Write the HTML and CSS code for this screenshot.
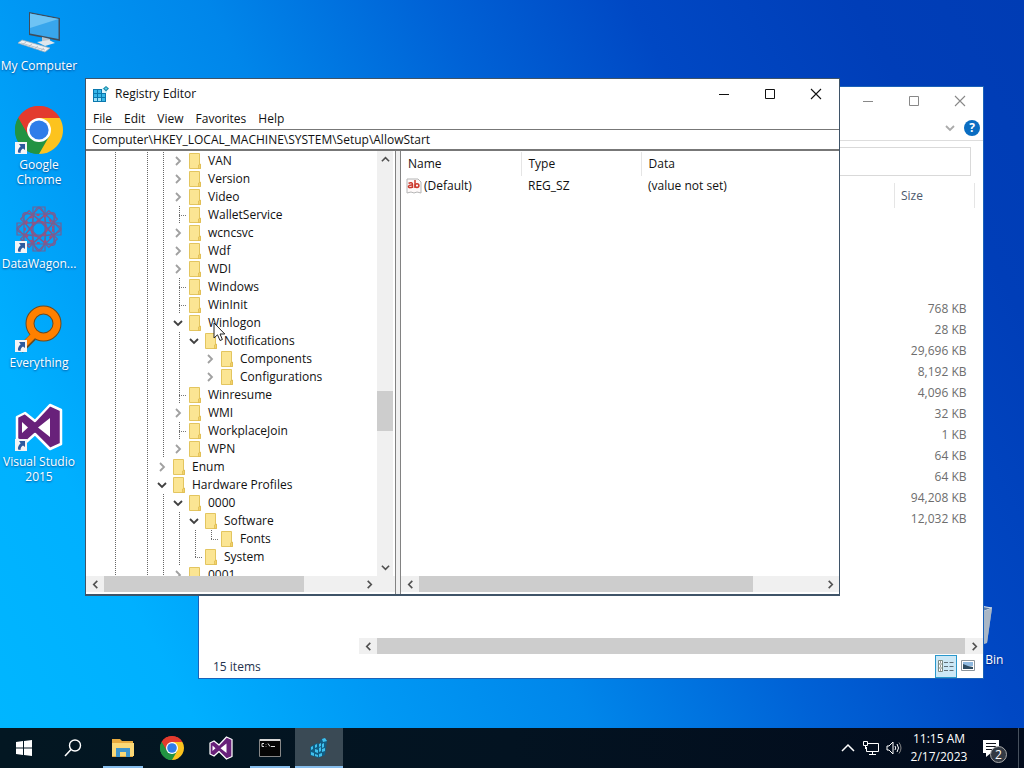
FILE: index.html
```html
<!DOCTYPE html>
<html lang="en">
<head>
<meta charset="utf-8">
<title>Registry Editor</title>
<link rel="stylesheet" href="styles.css">
</head>
<body>
<svg class="defs" aria-hidden="true">
  <symbol id="folder" viewBox="0 0 14 16"><path d="M1.500.5h10v11h1v4h-11z" fill="#fbe593" stroke="#e3c55f"/><path d="M10.500 15.500V12l2-1v4.500z" fill="#f3d36b" stroke="#dcb94f" stroke-width=".7"/></symbol>
  <symbol id="right" viewBox="0 0 10 10"><path d="M3 1l4 4-4 4" fill="none" stroke="currentColor" stroke-width="1.800"/></symbol>
  <symbol id="left" viewBox="0 0 10 10"><path d="M7 1L3 5l4 4" fill="none" stroke="currentColor" stroke-width="1.800"/></symbol>
  <symbol id="down" viewBox="0 0 10 10"><path d="M1 3l4 4 4-4" fill="none" stroke="currentColor" stroke-width="1.800"/></symbol>
  <symbol id="up" viewBox="0 0 10 10"><path d="M1 7l4-4 4 4" fill="none" stroke="currentColor" stroke-width="1.800"/></symbol>
  <symbol id="min" viewBox="0 0 12 12"><path d="M1 6.500h10" stroke="currentColor"/></symbol>
  <symbol id="max" viewBox="0 0 12 12"><path d="M1.500 1.500h9v9h-9z" fill="none" stroke="currentColor"/></symbol>
  <symbol id="close" viewBox="0 0 12 12"><path d="M1 1l10 10M11 1L1 11" stroke="currentColor" stroke-width="1.100"/></symbol>
  <symbol id="chrome" viewBox="0 0 48 48">
    <path d="M24 24L3.220 12A24 24 0 0 1 44.780 12z" fill="#e33b2e"/>
    <path d="M24 24L44.780 12A24 24 0 0 1 24 48z" fill="#fcc31e"/>
    <path d="M24 24v24A24 24 0 0 1 3.220 12z" fill="#229342"/>
    <path d="M24 12h20.780L34.400 30z" fill="#fcc31e"/>
    <path d="M3.220 12L13.600 30l8 5L24 12z" fill="#229342"/>
    <path d="M3.220 12L13.600 30 15 18l9-6h20.780A24 24 0 0 0 3.220 12z" fill="#e33b2e"/>
    <path d="M34.400 30L24 48l-6-2 4-10z" fill="#fcc31e"/>
    <path d="M34.400 30L24 48a24 24 0 0 1-20.780-36L13.600 30l10 6z" fill="#229342"/>
    <circle cx="24" cy="24" r="12" fill="#fff"/><circle cx="24" cy="24" r="9.600" fill="#2f7de9"/>
  </symbol>
  <symbol id="vs" viewBox="0 0 48 48">
    <path d="M35 2l11 5v34l-11 5-15-15-10 9-8-4V14l8-4 10 8z" fill="#68217a" stroke="#fff" stroke-width="2.500" stroke-linejoin="round"/>
    <path d="M35 15v19L23 24.500zM7 19l6 5.500L7 30z" fill="#fff"/>
  </symbol>
  <symbol id="link" viewBox="0 0 12 12"><path d="M0 0h12v12H0z" fill="#f4f4f6"/><path d="M4 2h6v6L8 6.500C6.500 7.500 5.500 8.500 5.500 11L3 10.500C2.500 8 4 5.500 5.700 4.200z" fill="#2d5a9e"/></symbol>
  <symbol id="regedit" viewBox="0 0 16 16">
    <path d="M0 3h13v13H0z" fill="#0b78ae"/>
    <path d="M1 4h3v3H1zM5 4h3v3H5zM1 8h3v3H1zM5 8h3v3H5zM9 8h3v3H9zM9 12h3v3H9z" fill="#38b7e8"/><path d="M1 12h3v3H1zM5 12h3v3H5z" fill="#9be2f8"/>
    <path d="M9 2h5v5H9z" fill="#d9f2fa"/><path d="M13 0l3 2.500L13 5.500l-3-3z" fill="#1587a9"/><path d="M13 1.200l1.500 1.400L13 4l-1.500-1.400z" fill="#64cfe4"/>
  </symbol>
</svg>

<main class="desktop">
  <ul class="shortcuts">
    <li><a class="shortcut" href="#"><svg class="art" viewBox="0 0 48 48">
      <path d="M14 5l31 6v23l-31-6z" fill="#3f4d5c"/><path d="M15 6.500l28.500 5.500v20L15 26.500z" fill="#38a6ec"/><path d="M15 6.500l28.500 5.500L15 21z" fill="#6ec3f4"/>
      <path d="M27 30l8 2v4h-8z" fill="#b8c4ce"/><path d="M22 35l12-2 6 3-10 3z" fill="#dfe6ec"/><path d="M3 36l4-3 28 8-5 4z" fill="#eef1f4" stroke="#9fb0bd" stroke-width=".8"/><path d="M6 36l24 7M11 35l-4 3M17 37l-4 3M23 39l-4 3M29 41l-4 3" stroke="#aeb9c2" stroke-width=".8"/></svg>
      <span>My Computer</span></a></li>
    <li><a class="shortcut" href="#"><svg class="art"><use href="#chrome"/></svg><svg class="arrow"><use href="#link"/></svg><span>Google Chrome</span></a></li>
    <li><a class="shortcut" href="#"><svg class="art" viewBox="0 0 48 48"><g fill="none" stroke="#6d6298" stroke-width="1.200">
      <ellipse cx="24" cy="24" rx="22" ry="7"/><ellipse cx="24" cy="24" rx="7" ry="22"/><path d="M9 9h30v30H9zM2 18h44v12H2zM18 2h12v44H18z"/>
      <g transform="rotate(45 24 24)" stroke="#7c5c90"><ellipse cx="24" cy="24" rx="22" ry="7"/><ellipse cx="24" cy="24" rx="7" ry="22"/><path d="M9 9h30v30H9zM4 18h40v12H4zM18 4h12v40H18z"/></g>
      <circle cx="24" cy="24" r="8" stroke="#b04a72" stroke-dasharray="3 2"/><circle cx="24" cy="24" r="14" stroke="#b04a72" stroke-width="1.800" stroke-dasharray="3 4"/></g></svg>
      <svg class="arrow"><use href="#link"/></svg><span>DataWagon...</span></a></li>
    <li><a class="shortcut" href="#"><svg class="art" viewBox="0 0 48 48">
      <path d="M18 33L5 46" stroke="#6b4a20" stroke-width="8"/><circle cx="28.500" cy="19.500" r="13.500" fill="none" stroke="#6b4a20" stroke-width="9"/>
      <path d="M19 31L6 44" stroke="#ff8000" stroke-width="6"/><circle cx="28.500" cy="19.500" r="13.500" fill="none" stroke="#ff8000" stroke-width="7"/></svg>
      <svg class="arrow"><use href="#link"/></svg><span>Everything</span></a></li>
    <li><a class="shortcut" href="#"><svg class="art"><use href="#vs"/></svg><svg class="arrow"><use href="#link"/></svg><span>Visual Studio 2015</span></a></li>
  </ul>
  <a class="shortcut bin" href="#"><svg class="art" viewBox="0 0 48 48"><path d="M6 7l14-4 24 4-5 35-24 3z" fill="#8fa8c6"/><path d="M6 7l14-4 24 4-10 4z" fill="#5d7ea8" stroke="#dfe7ef"/><path d="M34 11l10-4-5 35-6 2z" fill="#a9b7c6"/></svg><span>Recycle Bin</span></a>

  <section class="window explorer" aria-label="File Explorer">
    <header class="titlebar">
      <div class="controls"><button aria-label="Minimize"><svg><use href="#min"/></svg></button><button aria-label="Maximize"><svg><use href="#max"/></svg></button><button aria-label="Close"><svg><use href="#close"/></svg></button></div>
    </header>
    <div class="ribbon"><button class="expand" aria-label="Expand the ribbon"><svg><use href="#down"/></svg></button><button class="help" aria-label="Help">?</button></div>
    <div class="locate"><input type="search" aria-label="Search"></div>
    <div class="files">
      <table>
        <thead><tr><th>Size</th></tr></thead>
        <tbody>
          <tr><td>768 KB</td></tr><tr><td>28 KB</td></tr><tr><td>29,696 KB</td></tr><tr><td>8,192 KB</td></tr><tr><td>4,096 KB</td></tr><tr><td>32 KB</td></tr><tr><td>1 KB</td></tr><tr><td>64 KB</td></tr><tr><td>64 KB</td></tr><tr><td>94,208 KB</td></tr><tr><td>12,032 KB</td></tr>
        </tbody>
      </table>
    </div>
    <div class="hscroll"><button aria-label="Scroll left"><svg><use href="#left"/></svg></button><div class="thumb all"></div><button aria-label="Scroll right"><svg><use href="#right"/></svg></button></div>
    <footer class="status"><span>15 items</span>
      <button class="view on" aria-label="Details"><svg viewBox="0 0 18 14"><path d="M1.500 1.500h4v11h-4zM1.500 5h4M1.500 9h4" fill="#fff" stroke="#7b8a83"/><path d="M3 3h1M3 7h1M3 11h1" stroke="#333"/><path d="M7 3.500h4M12.500 3.500h4M7 7.500h4M12.500 7.500h4M7 11.500h4M12.500 11.500h4" stroke="#5f6f78"/></svg></button>
      <button class="view" aria-label="Large icons"><svg viewBox="0 0 18 14"><path d="M2.500 1.500h13v10h-13z" fill="#fff" stroke="#8c959b"/><path d="M4 3h10v4H4z" fill="#8fb9df"/><path d="M4 5l5 2 5 1v2H4z" fill="#2d4c62"/></svg></button>
    </footer>
  </section>

  <section class="window regedit" aria-label="Registry Editor">
    <header class="titlebar"><svg class="logo"><use href="#regedit"/></svg><h1>Registry Editor</h1>
      <div class="controls"><button aria-label="Minimize"><svg><use href="#min"/></svg></button><button aria-label="Maximize"><svg><use href="#max"/></svg></button><button aria-label="Close"><svg><use href="#close"/></svg></button></div>
    </header>
    <nav class="menu"><button>File</button><button>Edit</button><button>View</button><button>Favorites</button><button>Help</button></nav>
    <input class="address" type="text" aria-label="Address" value="Computer\HKEY_LOCAL_MACHINE\SYSTEM\Setup\AllowStart">
    <div class="panes">
      <div class="keys">
        <div class="treearea">
          <ul class="tree">
            <li><i class="g"></i><i></i><i class="g"></i><i class="g"></i><button class="shut" aria-label="Expand"><svg><use href="#right"/></svg></button><svg class="fold"><use href="#folder"/></svg><span>VAN</span></li>
            <li><i class="g"></i><i></i><i class="g"></i><i class="g"></i><button class="shut" aria-label="Expand"><svg><use href="#right"/></svg></button><svg class="fold"><use href="#folder"/></svg><span>Version</span></li>
            <li><i class="g"></i><i></i><i class="g"></i><i class="g"></i><button class="shut" aria-label="Expand"><svg><use href="#right"/></svg></button><svg class="fold"><use href="#folder"/></svg><span>Video</span></li>
            <li><i class="g"></i><i></i><i class="g"></i><i class="g"></i><i class="g t"></i><svg class="fold"><use href="#folder"/></svg><span>WalletService</span></li>
            <li><i class="g"></i><i></i><i class="g"></i><i class="g"></i><button class="shut" aria-label="Expand"><svg><use href="#right"/></svg></button><svg class="fold"><use href="#folder"/></svg><span>wcncsvc</span></li>
            <li><i class="g"></i><i></i><i class="g"></i><i class="g"></i><button class="shut" aria-label="Expand"><svg><use href="#right"/></svg></button><svg class="fold"><use href="#folder"/></svg><span>Wdf</span></li>
            <li><i class="g"></i><i></i><i class="g"></i><i class="g"></i><button class="shut" aria-label="Expand"><svg><use href="#right"/></svg></button><svg class="fold"><use href="#folder"/></svg><span>WDI</span></li>
            <li><i class="g"></i><i></i><i class="g"></i><i class="g"></i><i class="g t"></i><svg class="fold"><use href="#folder"/></svg><span>Windows</span></li>
            <li><i class="g"></i><i></i><i class="g"></i><i class="g"></i><i class="g t"></i><svg class="fold"><use href="#folder"/></svg><span>WinInit</span></li>
            <li><i class="g"></i><i></i><i class="g"></i><i class="g"></i><button class="open" aria-label="Collapse"><svg><use href="#down"/></svg></button><svg class="fold"><use href="#folder"/></svg><span>Winlogon</span></li>
            <li><i class="g"></i><i></i><i class="g"></i><i class="g"></i><i class="g"></i><button class="open" aria-label="Collapse"><svg><use href="#down"/></svg></button><svg class="fold"><use href="#folder"/></svg><span>Notifications</span></li>
            <li><i class="g"></i><i></i><i class="g"></i><i class="g"></i><i class="g"></i><i></i><button class="shut" aria-label="Expand"><svg><use href="#right"/></svg></button><svg class="fold"><use href="#folder"/></svg><span>Components</span></li>
            <li><i class="g"></i><i></i><i class="g"></i><i class="g"></i><i class="g"></i><i></i><button class="shut" aria-label="Expand"><svg><use href="#right"/></svg></button><svg class="fold"><use href="#folder"/></svg><span>Configurations</span></li>
            <li><i class="g"></i><i></i><i class="g"></i><i class="g"></i><i class="g t"></i><svg class="fold"><use href="#folder"/></svg><span>Winresume</span></li>
            <li><i class="g"></i><i></i><i class="g"></i><i class="g"></i><button class="shut" aria-label="Expand"><svg><use href="#right"/></svg></button><svg class="fold"><use href="#folder"/></svg><span>WMI</span></li>
            <li><i class="g"></i><i></i><i class="g"></i><i class="g"></i><i class="g t"></i><svg class="fold"><use href="#folder"/></svg><span>WorkplaceJoin</span></li>
            <li><i class="g"></i><i></i><i class="g"></i><i class="g"></i><button class="shut" aria-label="Expand"><svg><use href="#right"/></svg></button><svg class="fold"><use href="#folder"/></svg><span>WPN</span></li>
            <li><i class="g"></i><i></i><i class="g"></i><button class="shut" aria-label="Expand"><svg><use href="#right"/></svg></button><svg class="fold"><use href="#folder"/></svg><span>Enum</span></li>
            <li><i class="g"></i><i></i><i class="g"></i><button class="open" aria-label="Collapse"><svg><use href="#down"/></svg></button><svg class="fold"><use href="#folder"/></svg><span>Hardware Profiles</span></li>
            <li><i class="g"></i><i></i><i class="g"></i><i class="g"></i><button class="open" aria-label="Collapse"><svg><use href="#down"/></svg></button><svg class="fold"><use href="#folder"/></svg><span>0000</span></li>
            <li><i class="g"></i><i></i><i class="g"></i><i class="g"></i><i class="g"></i><button class="open" aria-label="Collapse"><svg><use href="#down"/></svg></button><svg class="fold"><use href="#folder"/></svg><span>Software</span></li>
            <li><i class="g"></i><i></i><i class="g"></i><i class="g"></i><i class="g"></i><i class="g"></i><i class="g t end"></i><svg class="fold"><use href="#folder"/></svg><span>Fonts</span></li>
            <li><i class="g"></i><i></i><i class="g"></i><i class="g"></i><i class="g"></i><i class="g t end"></i><svg class="fold"><use href="#folder"/></svg><span>System</span></li>
            <li><i class="g"></i><i></i><i class="g"></i><i class="g"></i><button class="shut" aria-label="Expand"><svg><use href="#right"/></svg></button><svg class="fold"><use href="#folder"/></svg><span>0001</span></li>
          </ul>
          <div class="vscroll"><button aria-label="Scroll up"><svg><use href="#up"/></svg></button><div class="track"><div class="thumb"></div></div><button aria-label="Scroll down"><svg><use href="#down"/></svg></button></div>
        </div>
        <div class="hscroll"><button aria-label="Scroll left"><svg><use href="#left"/></svg></button><div class="track"><div class="thumb tree-thumb"></div></div><button aria-label="Scroll right"><svg><use href="#right"/></svg></button></div>
      </div>
      <div class="values">
        <div class="valuearea">
          <table>
            <thead><tr><th>Name</th><th>Type</th><th>Data</th></tr></thead>
            <tbody><tr><td><svg class="ab" viewBox="0 0 16 16"><path d="M1 1h11l3 3v11l-4-1-3 1-3-1-4 1z" fill="#fdf9f9" stroke="#b5b5b5"/><g fill="none" stroke="#cc3a2e" stroke-width="1.500"><path d="M2.500 5.300c2-1 4-.8 4 1.200v3.500M6.500 7c-5-.4-5 3-2 2.600 1 0 2-.8 2-1.600"/><path d="M9 2v8"/><circle cx="11" cy="7.600" r="1.900"/></g></svg>(Default)</td><td>REG_SZ</td><td>(value not set)</td></tr></tbody>
          </table>
        </div>
        <div class="hscroll"><button aria-label="Scroll left"><svg><use href="#left"/></svg></button><div class="track"><div class="thumb value-thumb"></div></div><button aria-label="Scroll right"><svg><use href="#right"/></svg></button></div>
      </div>
    </div>
  </section>
  <svg class="cursor" viewBox="0 0 13 20"><path d="M1 1v15l3.500-3.200L7 18.500l2.400-1L7 12h4.800z" fill="#fff" stroke="#222"/></svg>
</main>

<footer class="taskbar">
  <button aria-label="Start"><svg viewBox="0 0 24 24"><path d="M4 6l7-1v6.500H4zM12 4.900L20 4v7.500h-8zM4 12.500h7V19l-7-1zM12 12.500h8V20l-8-1z" fill="#fff"/></svg></button>
  <button class="search" aria-label="Search"><svg viewBox="0 0 24 24"><circle cx="14" cy="9.500" r="5.500" fill="none" stroke="#fff" stroke-width="1.400"/><path d="M10 13.500l-6 6.500" stroke="#fff" stroke-width="1.500"/></svg></button>
  <button class="run" aria-label="File Explorer"><svg viewBox="0 0 24 24"><path d="M1 3h8l2 2h11v16H1z" fill="#e8ab3f"/><path d="M1 7h22v13H1z" fill="#fbd977"/><path d="M5 12h14v9h-4v-5H9v5H5z" fill="#3f95cd"/></svg></button>
  <button aria-label="Google Chrome"><svg><use href="#chrome"/></svg></button>
  <button aria-label="Visual Studio"><svg><use href="#vs"/></svg></button>
  <button class="run" aria-label="Command Prompt"><svg viewBox="0 0 24 24"><path d="M1.500 3.500h21v17h-21z" fill="#050505" stroke="#888"/><path d="M2 3h20v2H2z" fill="#d8d8d8"/><path d="M6 7.500H4v3h2M8 8v.5M8 10v.5M10 7.500l2 3M13 10.500h4" stroke="#ddd" fill="none"/></svg></button>
  <button class="run active" aria-label="Registry Editor"><svg viewBox="0 0 24 24"><path d="M3 11l7-4 3 1V4l4-2 3 3-2 14-7 3-8-3z" fill="#125d83"/><path d="M4 11l2-1v3l-2 1zM8 9l2-1v3l-2 1zM12 8l2-1v3l-2 1zM4 16l3 1v3l-3-1zM8 13l3 1v3l-3-1zM12 12l2-1v4l-2 1zM15 8l2-1v4l-2 1zM15 13l3-1v3l-3 1zM12 18l3-1v3l-3 1zM8 18l3 1v2l-3-1zM15 3l3-1 2 3-4 1z" fill="#3fc0ee"/></svg></button>
  <div class="tray">
    <button aria-label="Show hidden icons"><svg viewBox="0 0 16 16"><path d="M2 11l6-6 6 6" fill="none" stroke="#fff" stroke-width="1.500"/></svg></button>
    <button aria-label="Network"><svg viewBox="0 0 16 16"><path d="M4 3.500h11.500v8H3.500V7M9.500 11.500V15M6 14.500h7M.5 1.500h4v4h-4zM2.500 5.500V9" fill="none" stroke="#fff"/></svg></button>
    <button aria-label="Volume"><svg viewBox="0 0 16 16"><path d="M1 6h2l4-4v12l-4-4H1z" fill="none" stroke="#fff"/><path d="M9 6q1.500 2 0 4M11 4q3 4 0 8" fill="none" stroke="#fff"/><path d="M13 2.500q4 5.500 0 11" fill="none" stroke="#888"/></svg></button>
    <button class="clock"><time>11:15 AM</time><time>2/17/2023</time></button>
    <button class="notice" aria-label="2 notifications"><svg viewBox="0 0 20 20"><path d="M2 2h16v13H10l-5 4v-4H2z" fill="#fff"/><path d="M5 5.500h10M5 8.500h10M5 11.500h6" stroke="#10131c"/></svg><span class="badge">2</span></button>
  </div>
</footer>
</body>
</html>
```
FILE: styles.css
```css
* { box-sizing: border-box; }
body {
  margin: 0;
  height: 100vh;
  display: flex;
  flex-direction: column;
  overflow: hidden;
  font-family: "Open Sans", "Noto Sans", sans-serif;
  font-size: 12px;
  line-height: 18px;
  color: #111;
}
button, input { font: inherit; color: inherit; border: 0; padding: 0; margin: 0; background: none; }
button { display: flex; align-items: center; justify-content: center; }
svg { display: block; flex: none; }
ul { list-style: none; margin: 0; padding: 0; }
table { border-collapse: collapse; table-layout: fixed; }
th, td { font-weight: 400; padding: 0; }
a { color: inherit; text-decoration: none; }
.defs { position: absolute; width: 0; height: 0; }

.desktop {
  flex: 1;
  position: relative;
  overflow: hidden;
  background: linear-gradient(62deg, #00b6ff 0%, #00b0ff 14%, #0098f4 28%, #0086ea 42%, #0062d6 58%, #0048c4 72%, #003eb8 88%, #003cb4 100%);
}
.shortcuts { width: 78px; padding-top: 7px; display: flex; flex-direction: column; }
.shortcuts li { height: 99px; }
.shortcut {
  position: relative;
  display: flex;
  flex-direction: column;
  align-items: center;
  gap: 3px;
  color: #fff;
  line-height: 15px;
  text-align: center;
  text-shadow: 0 1px 2px #0048;
}
.shortcut .art { width: 48px; height: 48px; overflow: visible; }
.shortcut .arrow { position: absolute; left: 15px; top: 36px; width: 12px; height: 12px; }
.bin { position: absolute; left: 934px; top: 601px; width: 76px; }

.window { position: absolute; display: flex; flex-direction: column; background: #fff; }
.titlebar { height: 28px; display: flex; align-items: center; }
.titlebar h1 { margin: 0; font-size: 12px; font-weight: 400; }
.logo { width: 16px; height: 16px; margin: 0 6px 0 7px; }
.controls { margin-left: auto; display: flex; }
.controls button { width: 46px; height: 28px; }
.controls svg { width: 12px; height: 12px; }

.explorer { left: 198px; top: 86px; width: 786px; height: 593px; border: 1px solid #1a62b8; }
.explorer .titlebar { color: #888; }
.ribbon { height: 26px; display: flex; justify-content: flex-end; align-items: center; gap: 9px; padding-right: 3px; border-bottom: 1px solid #ddd; }
.ribbon svg { width: 10px; height: 10px; color: #aaa; }
.help { width: 16px; height: 16px; border-radius: 50%; background: #0a6dc2; color: #fff; font-weight: 700; }
.locate { padding: 6px 12px 7px; display: flex; justify-content: flex-end; }
.locate input { width: 190px; height: 29px; border: 1px solid #d9d9d9; }
.files { flex: 1; display: flex; justify-content: flex-end; padding-right: 8px; color: #6d6d6d; }
.files table { width: 81px; height: min-content; }
.files th { height: 25px; padding-left: 6px; text-align: left; border: solid #e5e5e5; border-width: 0 1px; color: #4c5a6e; }
.files tbody::before { content: ""; display: block; height: 90px; }
.files td { height: 21px; padding-right: 8px; text-align: right; }
.status { height: 24px; display: flex; align-items: center; padding: 0 4px 0 14px; color: #24324e; }
.status span { margin-right: auto; padding-top: 2px; }
.view { width: 22px; height: 23px; }
.view svg { width: 18px; height: 14px; }
.view.on { background: #cce8f6; border: 1px solid #2a98cc; }

.hscroll { display: flex; height: 16px; background: #f0f0f0; color: #505050; }
.hscroll button { width: 18px; }
.hscroll svg, .vscroll svg { width: 9px; height: 9px; }
.explorer .hscroll { margin-left: 160px; }
.track { flex: 1; display: flex; }
.thumb { background: #cdcdcd; }
.all { flex: 1; }
.vscroll { width: 16px; display: flex; flex-direction: column; background: #f0f0f0; color: #505050; }
.vscroll button { height: 17px; }
.vscroll .track { flex-direction: column; }
.vscroll .thumb { height: 40px; margin-top: 223px; }
.tree-thumb { width: 78%; }
.value-thumb { width: 83%; }

.regedit { left: 85px; top: 78px; width: 755px; height: 518px; border: 1px solid #3f5468; border-width: 1px 1px 2px; }
.regedit .titlebar { height: 30px; }
.menu { height: 20px; display: flex; align-items: center; gap: 12px; padding-left: 7px; }
.address { height: 22px; padding: 0 6px; border: 1px solid #777; border-width: 1px 0 2px; }
.panes { flex: 1; min-height: 0; display: flex; gap: 4px; background: #f0f0f0; }
.keys { width: 310px; display: flex; flex-direction: column; background: #fff; border-right: 1px solid #828282; }
.treearea { flex: 1; min-height: 0; display: flex; padding-right: 2px; }
.tree { flex: 1; overflow: hidden; padding: 1px 0 0 20px; }
.tree li { display: flex; height: 18px; align-items: center; }
.tree i, .tree button { width: 16px; height: 18px; flex: none; }
.g { background: repeating-linear-gradient(#666 0 1px, transparent 1px 2px) 9px 0 / 1px 18px no-repeat; }
.t { background: repeating-linear-gradient(#666 0 1px, transparent 1px 2px) 9px 0 / 1px 18px no-repeat, repeating-linear-gradient(90deg, #777 0 1px, transparent 1px 2px) 9px 9px / 8px 1px no-repeat; }
.end { background-size: 1px 9px, 8px 1px; }
.tree button svg { width: 10px; height: 10px; }
.shut { color: #a0a0a0; }
.open { color: #404040; }
.fold { width: 14px; height: 16px; margin: 0 6px 0 2px; }
.values { flex: 1; min-width: 0; display: flex; flex-direction: column; background: #fff; border-left: 1px solid #828282; }
.keys .hscroll { padding-right: 17px; margin-bottom: 2px; }
.values .hscroll { margin-bottom: 2px; }
.valuearea { flex: 1; overflow: hidden; padding-top: 1px; }
.valuearea table { width: 100%; }
.valuearea th { height: 24px; padding-left: 7px; text-align: left; }
.valuearea th:not(:last-child) { width: 120px; border-right: 1px solid #e5e5e5; }
.valuearea td { height: 19px; padding-left: 7px; white-space: nowrap; }
.valuearea td:first-child { padding-left: 5px; display: flex; align-items: center; gap: 2px; }
.ab { width: 16px; height: 16px; }
.cursor { position: absolute; left: 213px; top: 322px; width: 13px; height: 20px; }

.taskbar { height: 40px; display: flex; gap: 1px; background: linear-gradient(90deg, #031722, #031321 50%, #020b1c); color: #fff; }
.taskbar > button { width: 48px; }
.taskbar > button svg { width: 24px; height: 24px; }
.run { background: linear-gradient(#86bdec, #86bdec) center bottom / 40px 2px no-repeat; }
.taskbar > .search { width: 49px; padding-right: 2px; }
.run.active { background-color: #3a4a55; background-size: 48px 2px; }
.tray { margin-left: auto; display: flex; align-items: center; padding-right: 5px; gap: 7px; }
.tray svg { width: 16px; height: 16px; }
.clock { flex-direction: column; width: 60px; }
.notice { width: 43px; height: 40px; position: relative; justify-content: flex-start; padding-left: 5px; border-right: 1px solid #46505d; }
.notice svg { width: 20px; height: 20px; }
.badge { position: absolute; left: 14px; top: 18px; width: 17px; height: 17px; border: 1px solid #aaa; border-radius: 50%; background: #333a44; line-height: 15px; }
```
